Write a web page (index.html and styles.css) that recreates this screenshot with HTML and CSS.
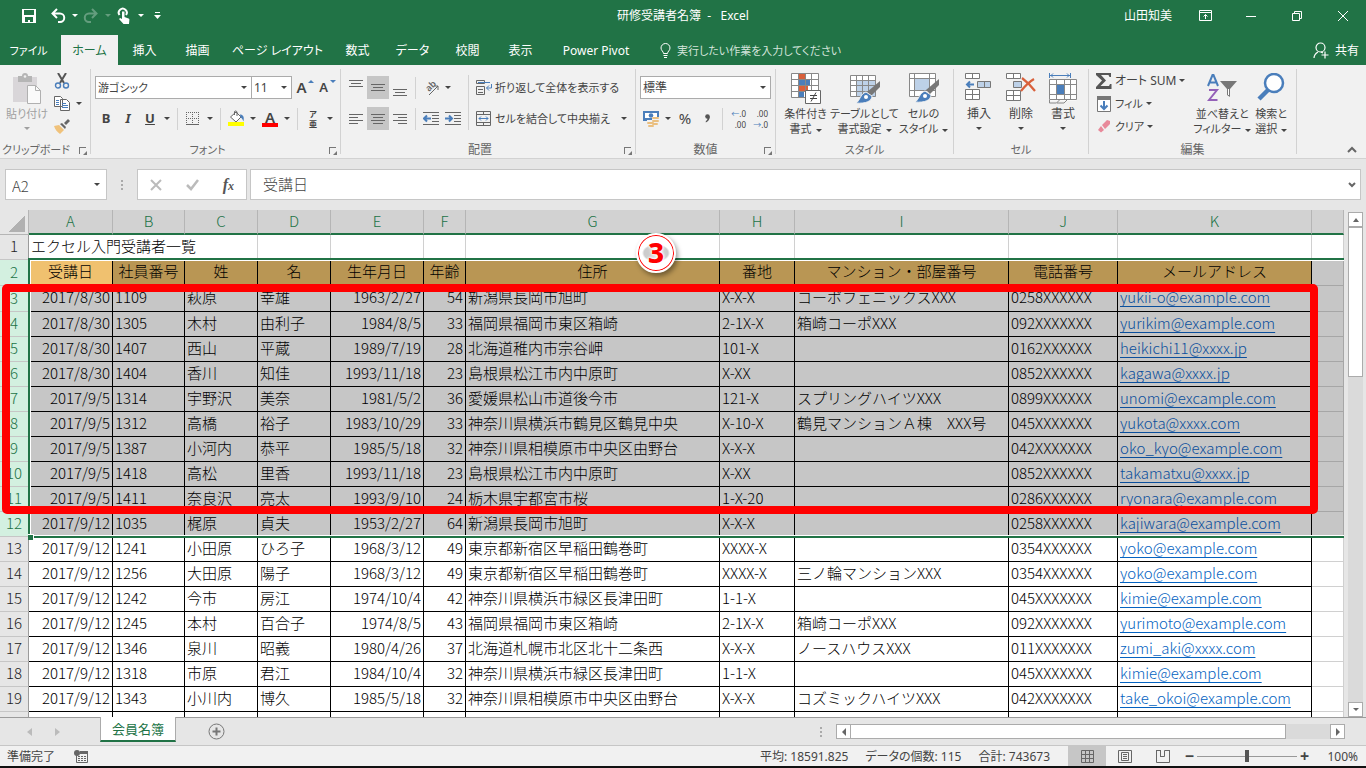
FILE: index.html
```html
<!DOCTYPE html>
<html lang="ja">
<head>
    <meta charset="UTF-8">
    <meta name="viewport" content="width=device-width, initial-scale=1.0">
    <title>研修受講者名簿 - Excel</title>
    <link rel="stylesheet" href="styles.css">
</head>
<body>
    <header class="titlebar">
        <div class="quick">
            <button class="quick-btn" aria-label="上書き保存"><svg width="16" height="16" viewBox="0 0 16 16"><path d="M1 1h14v14H1z" fill="#fff"/><path d="M3 2h10v5H3zM4 9h8v5H9v-2H7v2H4z" fill="#217346"/></svg></button>
            <button class="quick-btn" aria-label="元に戻す"><svg width="16" height="16" viewBox="0 0 16 16" fill="none" stroke="#fff" stroke-width="2"><path d="M7 1L2.500 5.500 7 10M3 5.500h7a4 4 0 0 1 0 8.500H8"/></svg></button>
            <button class="quick-caret" aria-label="元に戻す履歴"><i class="caret"></i></button>
            <button class="quick-btn dim" aria-label="やり直し"><svg width="16" height="16" viewBox="0 0 16 16" fill="none" stroke="#fff" stroke-width="2"><path d="M9 1l4.500 4.500L9 10M13 5.500H6A4 4 0 0 0 6 14h2"/></svg></button>
            <button class="quick-caret dim" aria-label="やり直し履歴"><i class="caret"></i></button>
            <button class="quick-btn" aria-label="タッチ/マウス"><svg width="16" height="18" viewBox="0 0 16 18"><path d="M3.500 8A4 4 0 1 1 10 8" fill="none" stroke="#fff" stroke-width="2"/><path d="M6 4.500h2.500V10l4 1.500c1 .4 1 1 .8 2L13 17H7.500L3 12l1.200-1L6 12z" fill="#fff"/></svg></button>
            <button class="quick-caret" aria-label="モード"><i class="caret"></i></button>
            <button class="quick-btn" aria-label="クイックアクセスのカスタマイズ"><svg width="7" height="8" viewBox="0 0 7 8" fill="#fff"><path d="M1 0h5v1H1zM0 3h7L3.500 7z"/></svg></button>
        </div>
        <h1 class="title">研修受講者名簿&nbsp; -&nbsp; &nbsp;Excel</h1>
        <div class="window">
            <span class="user">山田知美</span>
            <button class="win-btn" aria-label="リボンの表示オプション"><svg width="13" height="11" viewBox="0 0 13 11" fill="none" stroke="#fff"><path d="M.5.5h12v10H.5zM1 2.500h11M6.500 9V4.500M4.500 6.500l2-2 2 2"/></svg></button>
            <button class="win-btn" aria-label="最小化"><svg width="10" height="10" viewBox="0 0 10 10" stroke="#fff"><path d="M0 5.500h10"/></svg></button>
            <button class="win-btn" aria-label="元に戻す(縮小)"><svg width="10" height="10" viewBox="0 0 10 10" fill="none" stroke="#fff"><path d="M.5 2.500h7v7h-7zM2.500 2V.5h7v7H8"/></svg></button>
            <button class="win-btn" aria-label="閉じる"><svg width="10" height="10" viewBox="0 0 10 10" stroke="#fff"><path d="M0 0l10 10M10 0L0 10"/></svg></button>
        </div>
    </header>

    <nav class="tabs">
        <button class="tab file">ファイル</button>
        <button class="tab mid active">ホーム</button>
        <button class="tab">挿入</button>
        <button class="tab">描画</button>
        <button class="tab long">ページ レイアウト</button>
        <button class="tab">数式</button>
        <button class="tab mid">データ</button>
        <button class="tab">校閲</button>
        <button class="tab">表示</button>
        <button class="tab power">Power Pivot</button>
        <button class="tellme"><svg width="11" height="15" viewBox="0 0 11 15" fill="none" stroke="#fff"><path d="M3.500 10.500c0-2-2.500-3-2.500-5.500a4.500 4.500 0 0 1 9 0c0 2.500-2.500 3.500-2.500 5.500zM3.500 12.500h4M4 14.500h3"/></svg>実行したい作業を入力してください</button>
        <button class="share"><svg width="16" height="17" viewBox="0 0 16 17" fill="none" stroke="#fff" stroke-width="1.200"><circle cx="7.500" cy="5.500" r="4.500"/><path d="M1 16c0-3 1.500-4.500 4-6M8 10l2 1M12 9.500v7M8.500 13h7"/></svg>共有</button>
    </nav>

    <section class="ribbon">
        <div class="group clipboard">
            <div class="tools">
                <button class="big paste"><svg width="30" height="31" viewBox="0 0 30 31"><path d="M1 4h24v25H1z" fill="#d9d6d9"/><path d="M6 3h4a3 3 0 0 1 6 0h4v6H6z" fill="#b5b5b5"/><circle cx="13" cy="3.500" r="1.300" fill="#f1f1f1"/><path d="M15.500 12.500h8l5 5v13h-13z" fill="#fafafa" stroke="#b0b0b0"/><path d="M23.500 12.500v5h5" fill="none" stroke="#b0b0b0"/></svg><span>貼り付け</span><i class="caret"></i></button>
                <div class="stack">
                    <button class="tool" aria-label="切り取り"><svg width="16" height="16" viewBox="0 0 16 16" fill="none"><path d="M4 0l6 10M12 0L6 10" stroke="#555" stroke-width="2"/><circle cx="4" cy="12.500" r="2.500" stroke="#4a7ebb" stroke-width="1.400"/><circle cx="12" cy="12.500" r="2.500" stroke="#4a7ebb" stroke-width="1.400"/></svg></button>
                    <div class="row"><button class="tool" aria-label="コピー"><svg width="16" height="15" viewBox="0 0 16 15" fill="#fff" stroke="#666"><path d="M.5.5h6l2 2v8h-8zM6.500 3.500h6l3 3v8h-9z"/><path d="M2 4.500h3M2 6.500h3M2 8.500h3M8 7.500h4M8 9.500h6M8 11.500h6" stroke="#4a7ebb"/></svg></button><button class="drop" aria-label="コピーのオプション"><i class="caret"></i></button></div>
                    <button class="tool" aria-label="書式のコピー/貼り付け"><svg width="16" height="15" viewBox="0 0 16 15"><path d="M0 7l5-1 5 5-4 4C3 13 1 10 0 7z" fill="#f0c27b"/><path d="M6 5l2-1 4 4-1 2z" fill="#666"/><path d="M10 4l4-4 2 2-4 4z" fill="#666"/></svg></button>
                </div>
            </div>
            <div class="caption kana">クリップボード<i class="launcher"></i></div>
        </div>

        <div class="group font">
            <div class="tools rows">
                <div class="row">
                    <span class="combo family"><select aria-label="フォント"><option>游ゴシック</option></select><i class="caret"></i></span>
                    <span class="combo size"><select aria-label="フォント サイズ"><option>11</option></select><i class="caret"></i></span>
                    <button class="tool grow">A<i class="mark up"></i></button>
                    <button class="tool shrink">A<i class="mark down"></i></button>
                </div>
                <div class="row">
                    <button class="tool"><b>B</b></button>
                    <button class="tool"><b><em>I</em></b></button>
                    <button class="tool"><b><u>U</u></b></button>
                    <button class="drop" aria-label="下線の種類"><i class="caret"></i></button>
                    <i class="rule"></i>
                    <button class="tool" aria-label="罫線"><svg width="14" height="14" viewBox="0 0 14 14" stroke="#666"><path d="M.5 0v13M6.500 0v13M12.500 0v13M0 .5h13M0 6.500h13" stroke-dasharray="1 1"/><path d="M0 12.500h13"/></svg></button>
                    <button class="drop" aria-label="罫線の種類"><i class="caret"></i></button>
                    <i class="rule"></i>
                    <button class="tool" aria-label="塗りつぶしの色"><svg width="17" height="17" viewBox="0 0 17 17"><path d="M2.500 7L8 2l5 5-5 5z" fill="#fff" stroke="#666"/><path d="M6.500 5V1.500A1.500 1.500 0 0 1 9 2v4" fill="none" stroke="#666"/><path d="M12 4.500c3 0 4.500 2 3.500 7-1-2-1-3-3-4z" fill="#4a7ebb"/><path d="M0 12h16v4H0z" fill="#ff0"/></svg></button>
                    <button class="drop" aria-label="塗りつぶしの色の一覧"><i class="caret"></i></button>
                    <button class="tool color">A</button>
                    <button class="drop" aria-label="フォントの色の一覧"><i class="caret"></i></button>
                    <i class="rule"></i>
                    <button class="tool ruby"><span>ア</span><span>亜</span></button>
                    <button class="drop" aria-label="ふりがなの設定"><i class="caret"></i></button>
                </div>
            </div>
            <div class="caption kana">フォント<i class="launcher"></i></div>
        </div>

        <div class="group align">
            <div class="tools">
                <div class="rows">
                    <div class="row">
                        <button class="tool" aria-label="上揃え"><svg width="14" height="16" viewBox="0 0 14 16" stroke="#666"><path d="M0 .5h14M2 3.500h10M0 6.500h14"/></svg></button>
                        <button class="tool on" aria-label="上下中央揃え"><svg width="14" height="16" viewBox="0 0 14 16" stroke="#666"><path d="M0 4.500h14M2 7.500h10M0 10.500h14"/></svg></button>
                        <button class="tool" aria-label="下揃え"><svg width="14" height="16" viewBox="0 0 14 16" stroke="#666"><path d="M0 9.500h14M2 12.500h10M0 15.500h14"/></svg></button>
                        <i class="rule"></i>
                        <button class="tool" aria-label="方向"><svg width="20" height="22" viewBox="0 0 20 22"><text x="0" y="0" class="tilt" transform="translate(8 15) rotate(-45)">ab</text><path d="M8 18l9-9M13 9h4v4" fill="none" stroke="#666"/></svg></button>
                        <button class="drop" aria-label="方向の一覧"><i class="caret"></i></button>
                    </div>
                    <div class="row">
                        <button class="tool" aria-label="左揃え"><svg width="14" height="12" viewBox="0 0 14 12" stroke="#666"><path d="M0 1.500h14M0 4.500h9M0 7.500h14M0 10.500h9"/></svg></button>
                        <button class="tool on" aria-label="中央揃え"><svg width="14" height="12" viewBox="0 0 14 12" stroke="#666"><path d="M0 1.500h14M2 4.500h10M0 7.500h14M2 10.500h10"/></svg></button>
                        <button class="tool" aria-label="右揃え"><svg width="14" height="12" viewBox="0 0 14 12" stroke="#666"><path d="M0 1.500h14M5 4.500h9M0 7.500h14M5 10.500h9"/></svg></button>
                        <i class="rule"></i>
                        <button class="tool" aria-label="インデントを減らす"><svg width="16" height="13" viewBox="0 0 16 13" fill="none" stroke="#666"><path d="M0 .5h16M9 3.500h7M9 6.500h7M9 9.500h7M0 12.500h16"/><path d="M8 6.500H1M4 3.500l-3 3 3 3" stroke="#4a7ebb" stroke-width="2"/></svg></button>
                        <button class="tool" aria-label="インデントを増やす"><svg width="16" height="13" viewBox="0 0 16 13" fill="none" stroke="#666"><path d="M0 .5h16M9 3.500h7M9 6.500h7M9 9.500h7M0 12.500h16"/><path d="M0 6.500h7M4 3.500l3 3-3 3" stroke="#4a7ebb" stroke-width="2"/></svg></button>
                    </div>
                </div>
                <i class="rule tall"></i>
                <div class="rows">
                    <button class="wide"><svg width="16" height="15" viewBox="0 0 16 15" fill="none" stroke="#666"><path d="M.5.5h8v3h-8zM.5 6.500h8v8h-8zM2 9.500h5M2 12.500h5"/><path d="M2 2.500h12M15.500 4v4h-5M13 5.500l-2.500 2.500 2.500 2.500" stroke="#4a7ebb"/></svg>折り返して全体を表示する</button>
                    <div class="row"><button class="wide merge"><svg width="16" height="15" viewBox="0 0 16 15" fill="none" stroke="#666"><path d="M.5.5h14v14H.5zM1 3.500h13M1 11.500h13M7.500 1v2M7.500 12v2"/><path d="M3 7.500h9M5 5.500l-2 2 2 2M10 5.500l2 2-2 2" stroke="#4a7ebb"/></svg>セルを結合して中央揃え</button><button class="drop" aria-label="結合の一覧"><i class="caret"></i></button></div>
                </div>
            </div>
            <div class="caption">配置<i class="launcher"></i></div>
        </div>

        <div class="group number">
            <div class="tools rows">
                <div class="row"><span class="combo format"><select aria-label="表示形式"><option>標準</option></select><i class="caret"></i></span></div>
                <div class="row">
                    <button class="tool" aria-label="通貨表示形式"><svg width="17" height="16" viewBox="0 0 17 16"><path d="M0 0h16v10H0z" fill="#4a7ebb"/><path d="M2 2h12v5H2z" fill="#fff"/><circle cx="8" cy="4.500" r="2.300" fill="#4a7ebb"/><path d="M9 6h7v8H4v-5h5z" fill="#f1f1f1"/><g fill="#eabf80"><rect x="9" y="6" width="7" height="2" rx="1"/><rect x="9" y="9" width="7" height="2" rx="1"/><rect x="4" y="11" width="7" height="2" rx="1"/><rect x="9" y="12" width="6" height="2" rx="1"/><rect x="5" y="14" width="6" height="2" rx="1"/></g></svg></button>
                    <button class="drop" aria-label="通貨の一覧"><i class="caret"></i></button>
                    <button class="tool percent">%</button>
                    <button class="tool" aria-label="桁区切りスタイル"><svg width="5" height="9" viewBox="0 0 5 9" fill="#555"><circle cx="2.500" cy="2.500" r="2.300"/><path d="M4.800 2.500c0 3-1.500 5-4 6V7C2 6.500 2.500 5.500 2.500 4z"/></svg></button>
                    <i class="rule"></i>
                    <button class="tool digits"><span><i>←</i>.0</span><span>.00</span></button>
                    <button class="tool digits"><span>.00</span><span><i>→</i>.0</span></button>
                </div>
            </div>
            <div class="caption">数値<i class="launcher"></i></div>
        </div>

        <div class="group styles">
            <div class="tools">
                <button class="big"><svg width="30" height="31" viewBox="0 0 30 31"><path d="M.5.5h27v24H.5z" fill="#fff"/><path d="M8 1h6v5H8zM8 13h9v5H8z" fill="#d9603b"/><path d="M8 7h11v5H8zM8 19h5v5H8z" fill="#4a7ebb"/><path d="M.5.5h27v24H.5zM7.500 0v24M14.500 0v24M20.500 0v24M0 6.500h27M0 12.500h27M0 18.500h27" fill="none" stroke="#888"/><path d="M14.500 17.500h15v13h-15z" fill="#fff" stroke="#666"/><path d="M19 22.500h7M19 25.500h7M25 19.500l-5 9" stroke="#444"/></svg><span>条件付き</span><span>書式<i class="caret"></i></span></button>
                <button class="big"><svg width="30" height="31" viewBox="0 0 30 31"><path d="M.5 2.500h25v21H.5z" fill="#fff"/><path d="M7 8h19v16H7z" fill="#bdd1e8"/><path d="M.5 2.500h25v21H.5zM6.500 2v21M12.500 2v21M18.500 2v21M0 7.500h25M0 12.500h25M0 18.500h25" fill="none" stroke="#888"/><path d="M30 8v6l-9 9-4-4z" fill="#777"/><path d="M16 19l6 4c0 5-6 8-16 7 4-2 4-9 10-11z" fill="#4a7ebb" stroke="#f1f1f1"/><circle cx="16" cy="24" r="2" fill="#fff"/></svg><span>テーブルとして</span><span>書式設定<i class="caret"></i></span></button>
                <button class="big"><svg width="30" height="31" viewBox="0 0 30 31"><path d="M.5.5h26v23H.5z" fill="#fff"/><path d="M6 6h14v11H6z" fill="#bdd1e8"/><path d="M.5.5h26v23H.5zM5.500 0v23M20.500 0v23M0 5.500h26M0 17.500h26" fill="none" stroke="#888"/><path d="M30 6v6l-9 9-4-4z" fill="#777"/><path d="M16 18l6 4c0 5-6 8-16 7 4-2 4-9 10-11z" fill="#4a7ebb" stroke="#f1f1f1"/><circle cx="16" cy="23" r="2" fill="#fff"/></svg><span>セルの</span><span>スタイル<i class="caret"></i></span></button>
            </div>
            <div class="caption kana">スタイル</div>
        </div>

        <div class="group cells">
            <div class="tools">
                <button class="big"><svg width="30" height="31" viewBox="0 0 30 31"><g fill="#fff" stroke="#777"><path d="M1.500.5h14v5h-14zM8.500 0v5M1.500 16.500h14v10h-14zM8.500 17v10M2 21.500h14"/><path d="M13.500 8.500h13v6h-13zM20.500 8v6" fill="#bdd1e8"/></g><path d="M10 11.500H3M6 8.500l-3 3 3 3" fill="none" stroke="#4a7ebb" stroke-width="2"/></svg><span>挿入</span><i class="caret"></i></button>
                <button class="big"><svg width="30" height="31" viewBox="0 0 30 31"><g fill="#fff" stroke="#777"><path d="M.5.5h14v5H.5zM7.500 0v5M.5 17.500h14v10H.5zM7.500 18v10M1 22.500h14"/><path d="M7.500 8.500h8v6h-8z" fill="#bdd1e8"/></g><path d="M16 5c4 3 9 8 13 13M28 6c-5 3-9 7-13 12" fill="none" stroke="#d9603b" stroke-width="2.200"/></svg><span>削除</span><i class="caret"></i></button>
                <button class="big"><svg width="30" height="31" viewBox="0 0 30 31"><path d="M1.500 0v5M22.500 0v5M2 2.500h20M5 .5l-2 2 2 2M19 .5l2 2-2 2" fill="none" stroke="#4a7ebb"/><path d="M1.500 6.500h27v21h-27z" fill="#fff"/><path d="M9 12h7v9H9z" fill="#4a7ebb"/><path d="M1.500 6.500h27v20h-27zM8.500 6v20M16.500 6v20M22.500 6v20M1 11.500h27M1 21.500h27M1.500 27v3h7l3-3M9 30h7l3-3" fill="none" stroke="#888"/></svg><span>書式</span><i class="caret"></i></button>
            </div>
            <div class="caption kana">セル</div>
        </div>

        <div class="group edit">
            <div class="tools">
                <div class="list">
                    <button class="line sum"><svg width="16" height="16" viewBox="0 0 16 16"><path d="M0 0h15v4h-1.500l-1-2H5l5 5.500L4.500 13H13l1-2h1.500V16H0v-2l6-6.500L0 2z" fill="#555"/></svg>オート SUM<i class="caret"></i></button>
                    <button class="line"><svg width="16" height="16" viewBox="0 0 16 16"><path d="M1.500 1.500h13v14h-13z" fill="#fff" stroke="#777"/><path d="M1 0h14v4H1z" fill="#777"/><path d="M8 5v8M4.500 9.500L8 13l3.500-3.500" fill="none" stroke="#4a7ebb" stroke-width="2"/></svg>フィル<i class="caret"></i></button>
                    <button class="line"><svg width="16" height="16" viewBox="0 0 16 16"><path d="M6 6l5-5 3 1v3L9 10zM5 7l3 4-3 2.500L2 11z" fill="#e8899a"/></svg>クリア<i class="caret"></i></button>
                </div>
                <button class="big"><svg width="30" height="31" viewBox="0 0 30 31"><path d="M1 13L5.500 2h1L11 13M3 9.500h6" fill="none" stroke="#4a7ebb" stroke-width="2"/><path d="M2 17h8L2 27h8.500" fill="none" stroke="#9460b8" stroke-width="2"/><path d="M13 8h17l-7 8v8l-3-2v-6z" fill="#777"/><path d="M21 16h1v6h-1z" fill="#fff"/></svg><span>並べ替えと</span><span>フィルター<i class="caret"></i></span></button>
                <button class="big find"><svg width="30" height="31" viewBox="0 0 30 31"><circle cx="18" cy="10" r="9" fill="#fff" stroke="#4a7ebb" stroke-width="2.500"/><path d="M12 17L3 26" stroke="#4a7ebb" stroke-width="4.500"/></svg><span>検索と</span><span>選択<i class="caret"></i></span></button>
            </div>
            <div class="caption">編集</div>
        </div>
        <button class="collapse" aria-label="リボンを折りたたむ"><svg width="10" height="7" viewBox="0 0 10 7" fill="none" stroke="#666" stroke-width="2"><path d="M1 6l4-4 4 4"/></svg></button>
    </section>

    <section class="formula">
        <span class="namebox"><input type="text" value="A2" aria-label="名前ボックス"><i class="caret"></i></span>
        <i class="dots"></i>
        <div class="fx">
            <button aria-label="キャンセル"><svg width="12" height="12" viewBox="0 0 12 12" stroke="#bbb" stroke-width="2"><path d="M1 1l10 10M11 1L1 11"/></svg></button>
            <button aria-label="入力"><svg width="13" height="12" viewBox="0 0 13 12" fill="none" stroke="#bbb" stroke-width="2.500"><path d="M1 6l4 4 7-9"/></svg></button>
            <button class="fn"><em>f<small>x</small></em></button>
        </div>
        <span class="content"><input type="text" value="受講日" aria-label="数式バー"><svg width="8" height="6" viewBox="0 0 8 6" fill="none" stroke="#666" stroke-width="2"><path d="M1 1l3 3 3-3"/></svg></span>
    </section>

    <main class="sheet">
        <div class="grid">
            <table>
                <colgroup><col class="c-no"><col class="c-a"><col class="c-b"><col class="c-c"><col class="c-c"><col class="c-e"><col class="c-f"><col class="c-g"><col class="c-h"><col class="c-i"><col class="c-j"><col class="c-k"><col></colgroup>
                <thead>
                    <tr><th class="corner"></th><th>A</th><th>B</th><th>C</th><th>D</th><th>E</th><th>F</th><th>G</th><th>H</th><th>I</th><th>J</th><th>K</th><th></th></tr>
                </thead>
                <tbody>
                    <tr class="heading"><th>1</th><td colspan="3">エクセル入門受講者一覧</td><td></td><td></td><td></td><td></td><td></td><td></td><td></td><td></td><td></td></tr>
                    <tr class="sel fields"><th>2</th><td class="current">受講日</td><td>社員番号</td><td>姓</td><td>名</td><td>生年月日</td><td>年齢</td><td>住所</td><td>番地</td><td>マンション・部屋番号</td><td>電話番号</td><td>メールアドレス</td><td></td></tr>
                    <tr class="sel first"><th>3</th><td>2017/8/30</td><td>1109</td><td>萩原</td><td>幸雄</td><td>1963/2/27</td><td>54</td><td>新潟県長岡市旭町</td><td>X-X-X</td><td>コーポフェニックスXXX</td><td>0258XXXXXX</td><td><a href="#">yukii-o@example.com</a></td><td></td></tr>
                    <tr class="sel"><th>4</th><td>2017/8/30</td><td>1305</td><td>木村</td><td>由利子</td><td>1984/8/5</td><td>33</td><td>福岡県福岡市東区箱崎</td><td>2-1X-X</td><td>箱崎コーポXXX</td><td>092XXXXXXX</td><td><a href="#">yurikim@example.com</a></td><td></td></tr>
                    <tr class="sel"><th>5</th><td>2017/8/30</td><td>1407</td><td>西山</td><td>平蔵</td><td>1989/7/19</td><td>28</td><td>北海道稚内市宗谷岬</td><td>101-X</td><td></td><td>0162XXXXXX</td><td><a href="#">heikichi11@xxxx.jp</a></td><td></td></tr>
                    <tr class="sel"><th>6</th><td>2017/8/30</td><td>1404</td><td>香川</td><td>知佳</td><td>1993/11/18</td><td>23</td><td>島根県松江市内中原町</td><td>X-XX</td><td></td><td>0852XXXXXX</td><td><a href="#">kagawa@xxxx.jp</a></td><td></td></tr>
                    <tr class="sel"><th>7</th><td>2017/9/5</td><td>1314</td><td>宇野沢</td><td>美奈</td><td>1981/5/2</td><td>36</td><td>愛媛県松山市道後今市</td><td>121-X</td><td>スプリングハイツXXX</td><td>0899XXXXXX</td><td><a href="#">unomi@excample.com</a></td><td></td></tr>
                    <tr class="sel"><th>8</th><td>2017/9/5</td><td>1312</td><td>高橋</td><td>裕子</td><td>1983/10/29</td><td>33</td><td>神奈川県横浜市鶴見区鶴見中央</td><td>X-10-X</td><td>鶴見マンションＡ棟　XXX号</td><td>045XXXXXXX</td><td><a href="#">yukota@xxxx.com</a></td><td></td></tr>
                    <tr class="sel"><th>9</th><td>2017/9/5</td><td>1387</td><td>小河内</td><td>恭平</td><td>1985/5/18</td><td>32</td><td>神奈川県相模原市中央区由野台</td><td>X-X-X</td><td></td><td>042XXXXXXX</td><td><a href="#">oko_kyo@example.com</a></td><td></td></tr>
                    <tr class="sel"><th>10</th><td>2017/9/5</td><td>1418</td><td>高松</td><td>里香</td><td>1993/11/18</td><td>23</td><td>島根県松江市内中原町</td><td>X-XX</td><td></td><td>0852XXXXXX</td><td><a href="#">takamatxu@xxxx.jp</a></td><td></td></tr>
                    <tr class="sel"><th>11</th><td>2017/9/5</td><td>1411</td><td>奈良沢</td><td>亮太</td><td>1993/9/10</td><td>24</td><td>栃木県宇都宮市桜</td><td>1-X-20</td><td></td><td>0286XXXXXX</td><td><a href="#">ryonara@example.com</a></td><td></td></tr>
                    <tr class="sel"><th>12</th><td>2017/9/12</td><td>1035</td><td>梶原</td><td>貞夫</td><td>1953/2/27</td><td>64</td><td>新潟県長岡市旭町</td><td>X-X-X</td><td></td><td>0258XXXXXX</td><td><a href="#">kajiwara@example.com</a></td><td></td></tr>
                    <tr><th>13</th><td>2017/9/12</td><td>1241</td><td>小田原</td><td>ひろ子</td><td>1968/3/12</td><td>49</td><td>東京都新宿区早稲田鶴巻町</td><td>XXXX-X</td><td></td><td>0354XXXXXX</td><td><a href="#">yoko@example.com</a></td><td></td></tr>
                    <tr><th>14</th><td>2017/9/12</td><td>1256</td><td>大田原</td><td>陽子</td><td>1968/3/12</td><td>49</td><td>東京都新宿区早稲田鶴巻町</td><td>XXXX-X</td><td>三ノ輪マンションXXX</td><td>0354XXXXXX</td><td><a href="#">yoko@example.com</a></td><td></td></tr>
                    <tr><th>15</th><td>2017/9/12</td><td>1242</td><td>今市</td><td>房江</td><td>1974/10/4</td><td>42</td><td>神奈川県横浜市緑区長津田町</td><td>1-1-X</td><td></td><td>045XXXXXXX</td><td><a href="#">kimie@example.com</a></td><td></td></tr>
                    <tr><th>16</th><td>2017/9/12</td><td>1245</td><td>本村</td><td>百合子</td><td>1974/8/5</td><td>43</td><td>福岡県福岡市東区箱崎</td><td>2-1X-X</td><td>箱崎コーポXXX</td><td>092XXXXXXX</td><td><a href="#">yurimoto@example.com</a></td><td></td></tr>
                    <tr><th>17</th><td>2017/9/12</td><td>1346</td><td>泉川</td><td>昭義</td><td>1980/4/26</td><td>37</td><td>北海道札幌市北区北十二条西</td><td>X-X-X</td><td>ノースハウスXXX</td><td>011XXXXXXX</td><td><a href="#">zumi_aki@xxxx.com</a></td><td></td></tr>
                    <tr><th>18</th><td>2017/9/12</td><td>1318</td><td>市原</td><td>君江</td><td>1984/10/4</td><td>32</td><td>神奈川県横浜市緑区長津田町</td><td>1-1-X</td><td></td><td>045XXXXXXX</td><td><a href="#">kimie@example.com</a></td><td></td></tr>
                    <tr><th>19</th><td>2017/9/12</td><td>1343</td><td>小川内</td><td>博久</td><td>1985/5/18</td><td>32</td><td>神奈川県相模原市中央区由野台</td><td>X-X-X</td><td>コズミックハイツXXX</td><td>042XXXXXXX</td><td><a href="#">take_okoi@example.com</a></td><td></td></tr>
                    <tr><th></th><td></td><td></td><td></td><td></td><td></td><td></td><td></td><td></td><td></td><td></td><td></td><td></td></tr>
                </tbody>
            </table>
            <div class="selection"></div>
            <div class="handle"></div>
        </div>
        <div class="vscroll">
            <button class="arrow" aria-label="上へ"><i class="caret up"></i></button>
            <div class="thumb"></div>
            <button class="arrow last" aria-label="下へ"><i class="caret"></i></button>
        </div>
        <div class="callout"></div>
        <div class="badge">3</div>
    </main>

    <footer>
        <div class="sheets">
            <button class="nav" aria-label="前のシート"><svg width="5" height="8" viewBox="0 0 5 8" fill="#bbb"><path d="M5 0v8L0 4z"/></svg></button>
            <button class="nav" aria-label="次のシート"><svg width="5" height="8" viewBox="0 0 5 8" fill="#bbb"><path d="M0 0v8l5-4z"/></svg></button>
            <button class="sheet-tab">会員名簿</button>
            <button class="add" aria-label="新しいシート"><svg width="17" height="17" viewBox="0 0 17 17" fill="none" stroke="#777"><circle cx="8.500" cy="8.500" r="7.500"/><path d="M8.500 4.500v8M4.500 8.500h8" stroke-width="2"/></svg></button>
            <i class="dots"></i>
            <div class="hscroll">
                <button class="arrow" aria-label="左へ"><svg width="4" height="8" viewBox="0 0 4 8" fill="#666"><path d="M4 0v8L0 4z"/></svg></button>
                <div class="thumb"></div>
                <button class="arrow last" aria-label="右へ"><svg width="4" height="8" viewBox="0 0 4 8" fill="#666"><path d="M0 0v8l4-4z"/></svg></button>
            </div>
        </div>
        <div class="status">
            <span>準備完了</span>
            <svg class="macro" width="14" height="13" viewBox="0 0 14 13"><path d="M2.500 4v8.500h11v-11H6" fill="none" stroke="#666"/><path d="M6 1h8v3H6z" fill="#666"/><circle cx="3" cy="3" r="3" fill="#666"/><path d="M4 6.500h8M4 8.500h8M4 10.500h8" stroke="#666" stroke-dasharray="2 1"/></svg>
            <div class="totals"><span>平均: 18591.825</span><span>データの個数: 115</span><span>合計: 743673</span></div>
            <button class="view on" aria-label="標準"><svg width="13" height="13" viewBox="0 0 13 13" fill="none" stroke="#666"><path d="M.5.5h12v12H.5zM4.500 0v13M8.500 0v13M0 4.500h13M0 8.500h13"/></svg></button>
            <button class="view" aria-label="ページ レイアウト"><svg width="14" height="13" viewBox="0 0 14 13" fill="none" stroke="#666"><path d="M.5.5h13v12H.5zM3.500 2.500h7v8h-7zM5 4.500h4M5 6.500h4M5 8.500h4"/></svg></button>
            <button class="view" aria-label="改ページ プレビュー"><svg width="14" height="13" viewBox="0 0 14 13" fill="none" stroke="#666"><path d="M.5 0v12.500h13V0M0 .5h4.500v6h4V.5H14M4.500 7V0"/></svg></button>
            <button class="zoom" aria-label="縮小">−</button>
            <input class="slider" type="range" min="0" max="200" value="100" aria-label="ズーム">
            <button class="zoom" aria-label="拡大">+</button>
            <span class="rate">100%</span>
        </div>
    </footer>
</body>
</html>
```

FILE: styles.css
```css
* {
    box-sizing: border-box;
}
body {
    margin: 0;
    height: 100vh;
    display: flex;
    flex-direction: column;
    overflow: hidden;
    background: #e6e6e6;
    color: #444;
    font-family: "Noto Sans", "Noto Sans CJK JP", sans-serif;
    font-size: 12px;
    line-height: 15px;
    font-feature-settings: "palt";
    white-space: nowrap;
}
button, input, select {
    font: inherit;
    font-feature-settings: inherit;
    color: inherit;
    background: none;
    border: 0;
    padding: 0;
    margin: 0;
    outline: 0;
    white-space: nowrap;
}
svg {
    display: block;
    flex: none;
}
.caret {
    display: inline-block;
    flex: none;
    border: 3px solid transparent;
    border-top-color: currentColor;
    border-bottom: 0;
}
.caret.up {
    border-top: 0;
    border-bottom: 4px solid #666;
}

/* title bar */
.titlebar {
    display: grid;
    grid-template-columns: 1fr auto 1fr;
    align-items: center;
    height: 35px;
    padding-bottom: 4px;
    background: #217346;
    color: #fff;
}
.quick {
    display: flex;
    align-items: center;
    padding-left: 17px;
}
.quick button {
    display: flex;
    align-items: center;
    justify-content: center;
    height: 24px;
}
.quick-btn {
    width: 24px;
}
.quick-btn + .quick-btn {
    margin-left: 5px;
}
.quick-caret {
    width: 9px;
}
.dim {
    opacity: 0.3;
}
.title {
    margin: 0;
    font-size: 12px;
    font-weight: normal;
}
.window {
    display: flex;
    align-items: center;
    justify-content: flex-end;
}
.user {
    margin-right: 10px;
}
.win-btn {
    display: flex;
    justify-content: center;
    width: 46px;
}

/* ribbon tabs */
.tabs {
    display: flex;
    height: 30px;
    background: #217346;
    color: #fff;
}
.tab {
    width: 53px;
}
.tab.file {
    width: 61px;
    padding-right: 4px;
    font-size: 11px;
}
.tab.mid {
    width: 57px;
}
.tab.long {
    width: 107px;
}
.tab.power {
    width: 98px;
}
.tab.active {
    background: #f1f1f1;
    color: #217346;
}
.tellme, .share {
    display: flex;
    align-items: center;
    gap: 6px;
    margin-left: 15px;
    color: #d3e3da;
    font-size: 11px;
}
.share {
    margin-left: auto;
    margin-right: 7px;
    color: #fff;
    font-size: 12px;
}

/* ribbon */
.ribbon {
    display: flex;
    height: 94px;
    padding: 4px 0;
    background: #f1f1f1;
    border-bottom: 1px solid #d2d2d2;
}
.group {
    display: flex;
    flex-direction: column;
    justify-content: space-between;
    border-right: 1px solid #d2d2d2;
    padding: 0 4px;
}
.clipboard {
    width: 91px;
    padding: 0;
}
.font {
    width: 250px;
}
.align {
    width: 295px;
}
.number {
    width: 140px;
}
.styles {
    width: 178px;
    padding: 0;
}
.cells {
    width: 135px;
}
.edit {
    width: 208px;
}
.tools {
    display: flex;
}
.rows {
    display: flex;
    flex-direction: column;
    gap: 8px;
    padding-top: 7px;
}
.row {
    display: flex;
    align-items: center;
    height: 23px;
}
.caption {
    position: relative;
    text-align: center;
    height: 12px;
    line-height: 15px;
    color: #666;
}
.caption.kana {
    font-size: 11px;
}
.font .caption, .align .caption {
    padding-right: 16px;
}
.launcher {
    position: absolute;
    right: 0;
    bottom: 0;
    width: 7px;
    height: 7px;
    border-left: 1px solid #777;
    border-top: 1px solid #777;
}
.launcher::after {
    content: "";
    position: absolute;
    right: -1px;
    bottom: -1px;
    border: 2px solid transparent;
    border-right-color: #777;
    border-bottom-color: #777;
}
.clipboard .launcher {
    right: 4px;
}
.clipboard .caption {
    padding-right: 18px;
}
.tool {
    display: flex;
    align-items: center;
    justify-content: center;
    position: relative;
    width: 22px;
    height: 23px;
    font-size: 13px;
}
.tool.on, .view.on {
    background: #c6c6c6;
}
.drop {
    display: flex;
    align-items: center;
    justify-content: center;
    width: 12px;
    height: 23px;
}
.rule {
    width: 1px;
    height: 22px;
    margin: 0 4px;
    background: #d2d2d2;
}
.rule.tall {
    height: 55px;
    margin-top: 6px;
}
.combo {
    display: flex;
    align-items: center;
    position: relative;
    height: 23px;
    background: #fff;
    border: 1px solid #ababab;
}
.combo select {
    appearance: none;
    width: 100%;
    height: 21px;
    padding-left: 2px;
    font-size: 11px;
}
.combo.format select, .combo.size select {
    font-size: 12px;
}
.combo .caret {
    position: absolute;
    right: 4px;
    pointer-events: none;
}
.combo.family {
    width: 157px;
}
.combo.size {
    width: 40px;
    border-left: 0;
}
.combo.format {
    width: 131px;
}
.grow, .shrink {
    padding-right: 3px;
    font-size: 15px;
    font-weight: 600;
}
.shrink {
    font-size: 13px;
}
.mark {
    position: absolute;
    right: 0;
    top: 4px;
    border: 3px solid transparent;
}
.mark.up {
    border-bottom-color: #4a7ebb;
    border-top: 0;
}
.mark.down {
    border-top-color: #4a7ebb;
    border-bottom: 0;
}
.color {
    padding-bottom: 3px;
    font-size: 15px;
    font-weight: 600;
    line-height: 14px;
}
.color::after {
    content: "";
    position: absolute;
    left: 3px;
    bottom: 3px;
    width: 16px;
    height: 4px;
    background: #f00;
}
.ruby {
    flex-direction: column;
    font-size: 8px;
    line-height: 10px;
    font-weight: 600;
}
.ruby span, .digits span {
    display: block;
}
.tilt {
    font-size: 9px;
    font-weight: 600;
    fill: #666;
}
.wide {
    display: flex;
    align-items: center;
    gap: 3px;
    height: 23px;
    padding-left: 3px;
    font-size: 11px;
}
.wide.merge {
    width: 145px;
}
.percent {
    font-size: 15px;
}
.digits {
    flex-direction: column;
    align-items: flex-end;
    font-size: 8px;
    line-height: 11px;
    padding-right: 3px;
}
.digits i {
    font-style: normal;
    color: #4a7ebb;
}
.big {
    display: flex;
    flex-direction: column;
    align-items: center;
    width: 42px;
    padding-top: 4px;
}
.big > svg {
    margin-bottom: 2px;
}
.big > .caret {
    margin-top: 6px;
}
.big span .caret {
    margin-left: 4px;
    vertical-align: middle;
}
.paste {
    width: 50px;
    padding-left: 4px;
    color: #a0a0a0;
    font-size: 11px;
}
.stack {
    display: flex;
    flex-direction: column;
    padding-left: 1px;
}
.styles .big {
    width: 59px;
    font-size: 11px;
}
.list {
    display: flex;
    flex-direction: column;
    width: 102px;
    padding-left: 3px;
}
.line {
    display: flex;
    align-items: center;
    gap: 3px;
    height: 23px;
    font-size: 11px;
}
.line.sum {
    font-size: 12px;
}
.edit .big {
    width: 56px;
    font-size: 11px;
}
.edit .find {
    width: 42px;
}
.collapse {
    align-self: flex-end;
    margin: 0 9px 1px auto;
}

/* formula bar */
.formula {
    display: flex;
    align-items: center;
    height: 51px;
    padding: 0 5px;
    font-family: "Noto Sans CJK JP", sans-serif;
    font-weight: 300;
    font-size: 15px;
}
.namebox, .fx, .content {
    display: flex;
    align-items: center;
    height: 31px;
    background: #fff;
    border: 1px solid #c6c6c6;
}
.namebox {
    width: 102px;
    padding: 0 6px;
}
.namebox input {
    flex: 1;
    min-width: 0;
    padding-top: 2px;
}
.dots {
    width: 2px;
    height: 10px;
    margin: 0 14px;
    border-left: 2px dotted #aaa;
}
.fx {
    width: 110px;
    justify-content: space-around;
}
.fn {
    font: bold 16px "Liberation Serif", serif;
    color: #555;
}
.fn small {
    font-size: 12px;
}
.content {
    flex: 1;
    margin-left: 3px;
    padding: 0 4px 0 12px;
}
.content input {
    flex: 1;
    padding-bottom: 2px;
    font-feature-settings: normal;
}

/* sheet */
.sheet {
    position: relative;
    display: flex;
    flex: 1;
    min-height: 0;
}
.grid {
    position: relative;
    flex: 1;
    overflow: hidden;
    background: #fff;
}
table {
    width: 100%;
    table-layout: fixed;
    border-collapse: separate;
    border-spacing: 0;
    font-family: "Noto Sans CJK JP", sans-serif;
    font-weight: 300;
    font-size: 15px;
    line-height: 20px;
    font-feature-settings: normal;
    color: #000;
}
.c-no { width: 29px; }
.c-a { width: 84px; }
.c-b { width: 72px; }
.c-c { width: 73px; }
.c-e { width: 93px; }
.c-f { width: 42px; }
.c-g { width: 254px; }
.c-h { width: 75px; }
.c-i { width: 214px; }
.c-j { width: 109px; }
.c-k { width: 194px; }
th, td {
    height: 25px;
    padding: 0 2px 2px;
    overflow: hidden;
    font-weight: 300;
}
td {
    border-right: 1px solid #000;
    border-bottom: 1px solid #000;
}
td:last-child {
    border-color: #d0d0d0;
}
thead th {
    background: #d2d2d2;
    color: #217346;
    border-right: 1px solid #b5b5b5;
    border-bottom: 2px solid #217346;
}
thead .corner {
    background: linear-gradient(135deg, transparent 50%, #b1b1b1 50%) 8px 5px / 17px 17px no-repeat #e6e6e6;
    border-bottom: 1px solid #b5b5b5;
}
tbody th {
    background: #e6e6e6;
    border-right: 1px solid #9b9b9b;
    border-bottom: 1px solid #c6c6c6;
    color: #222;
}
.heading td {
    padding-bottom: 4px;
    border-color: #d0d0d0;
    border-bottom: 0;
}
.sel th {
    background: #d3f0e0;
    color: #217346;
}
.sel td {
    background: #c6c6c6;
}
.sel td:last-child {
    border-color: #a6a6a6;
}
.fields td {
    height: 26px;
    padding-bottom: 4px;
    background: #b99654;
}
.fields td.current {
    background: #f0c16f;
}
.fields td:last-child {
    background: #c6c6c6;
}
.first td {
    height: 26px;
    padding-bottom: 4px;
}
td:nth-child(2), td:nth-child(6), td:nth-child(7) {
    text-align: right;
}
.heading td:nth-child(n) {
    text-align: left;
}
.fields td:nth-child(n) {
    text-align: center;
}
a {
    color: #0563c1;
    text-decoration-skip-ink: none;
    text-underline-offset: 3px;
}
.sel a {
    color: #0b4f9c;
}
.selection {
    position: absolute;
    left: 28px;
    right: -4px;
    top: 48px;
    height: 280px;
    border: 2px solid #217346;
    box-shadow: inset 0 0 0 1px #fff;
}
.handle {
    position: absolute;
    left: 28px;
    top: 324px;
    width: 6px;
    height: 6px;
    background: #217346;
    border: solid #fff;
    border-width: 1px 1px 0 0;
}
.callout {
    position: absolute;
    left: 2px;
    right: 48px;
    top: 74px;
    height: 230px;
    border: 8px solid #f00;
    border-radius: 5px;
}
.badge {
    position: absolute;
    left: 636px;
    top: 23px;
    width: 40px;
    height: 40px;
    border: 2px solid #fff;
    border-radius: 50%;
    background: radial-gradient(14px 9px, #ccc 85%, #fff) padding-box, #fff;
    box-shadow: inset 0 0 0 1px #f00, 2px 3px 5px rgba(0, 0, 0, 0.4);
    color: #f00;
    font-size: 28px;
    font-weight: 800;
    line-height: 35px;
    text-align: center;
    text-shadow: 0 0 2px #fff, 0 0 3px #fff, 0 0 3px #fff, 0 0 4px #fff;
}

/* scroll bars */
.vscroll {
    display: flex;
    flex-direction: column;
    width: 15px;
    margin: 2px 3px 0 4px;
    background: #dadada;
}
.arrow {
    display: flex;
    align-items: center;
    justify-content: center;
    flex: none;
    width: 15px;
    height: 15px;
    background: #fff;
    border: 1px solid #ababab;
    color: #666;
}
.thumb {
    background: #fff;
    border: 1px solid #ababab;
}
.vscroll .thumb {
    height: 150px;
}
.vscroll .last {
    margin-top: auto;
}
.sheets {
    display: flex;
    align-items: center;
    height: 29px;
    padding-right: 21px;
    border-top: 1px solid #9b9b9b;
    border-bottom: 1px solid #c6c6c6;
}
.nav {
    display: flex;
    justify-content: center;
    width: 28px;
}
.nav:first-child {
    margin-left: 15px;
}
.sheet-tab {
    align-self: flex-start;
    width: 76px;
    height: 25px;
    margin: -1px 32px 0 29px;
    padding-top: 2px;
    background: #fff;
    border: 1px solid #ababab;
    border-top: 0;
    border-bottom: 2px solid #217346;
    color: #217346;
    font-size: 13px;
}
.sheets .dots {
    margin-left: auto;
}
.hscroll {
    display: flex;
    width: 509px;
    background: #dadada;
}
.hscroll .thumb {
    width: 435px;
    border-left: 0;
}
.hscroll .last {
    margin-left: auto;
}

/* status bar */
.status {
    display: flex;
    align-items: center;
    height: 22px;
    padding: 0 8px 0 7px;
    background: #f1f1f1;
    border-bottom: 2px solid #111;
}
.macro {
    margin-left: 19px;
}
.totals {
    display: flex;
    gap: 17px;
    margin-left: auto;
    margin-right: 18px;
}
.view {
    display: flex;
    align-items: center;
    justify-content: center;
    width: 38px;
    height: 20px;
}
.zoom {
    width: 15px;
    font-size: 16px;
    font-weight: 700;
}
.slider {
    appearance: none;
    width: 100px;
    height: 12px;
    background: linear-gradient(#999, #999) center / 100% 1px no-repeat;
}
.slider::-webkit-slider-thumb {
    appearance: none;
    width: 4px;
    height: 12px;
    background: #555;
}
.rate {
    width: 46px;
    text-align: right;
}
```
